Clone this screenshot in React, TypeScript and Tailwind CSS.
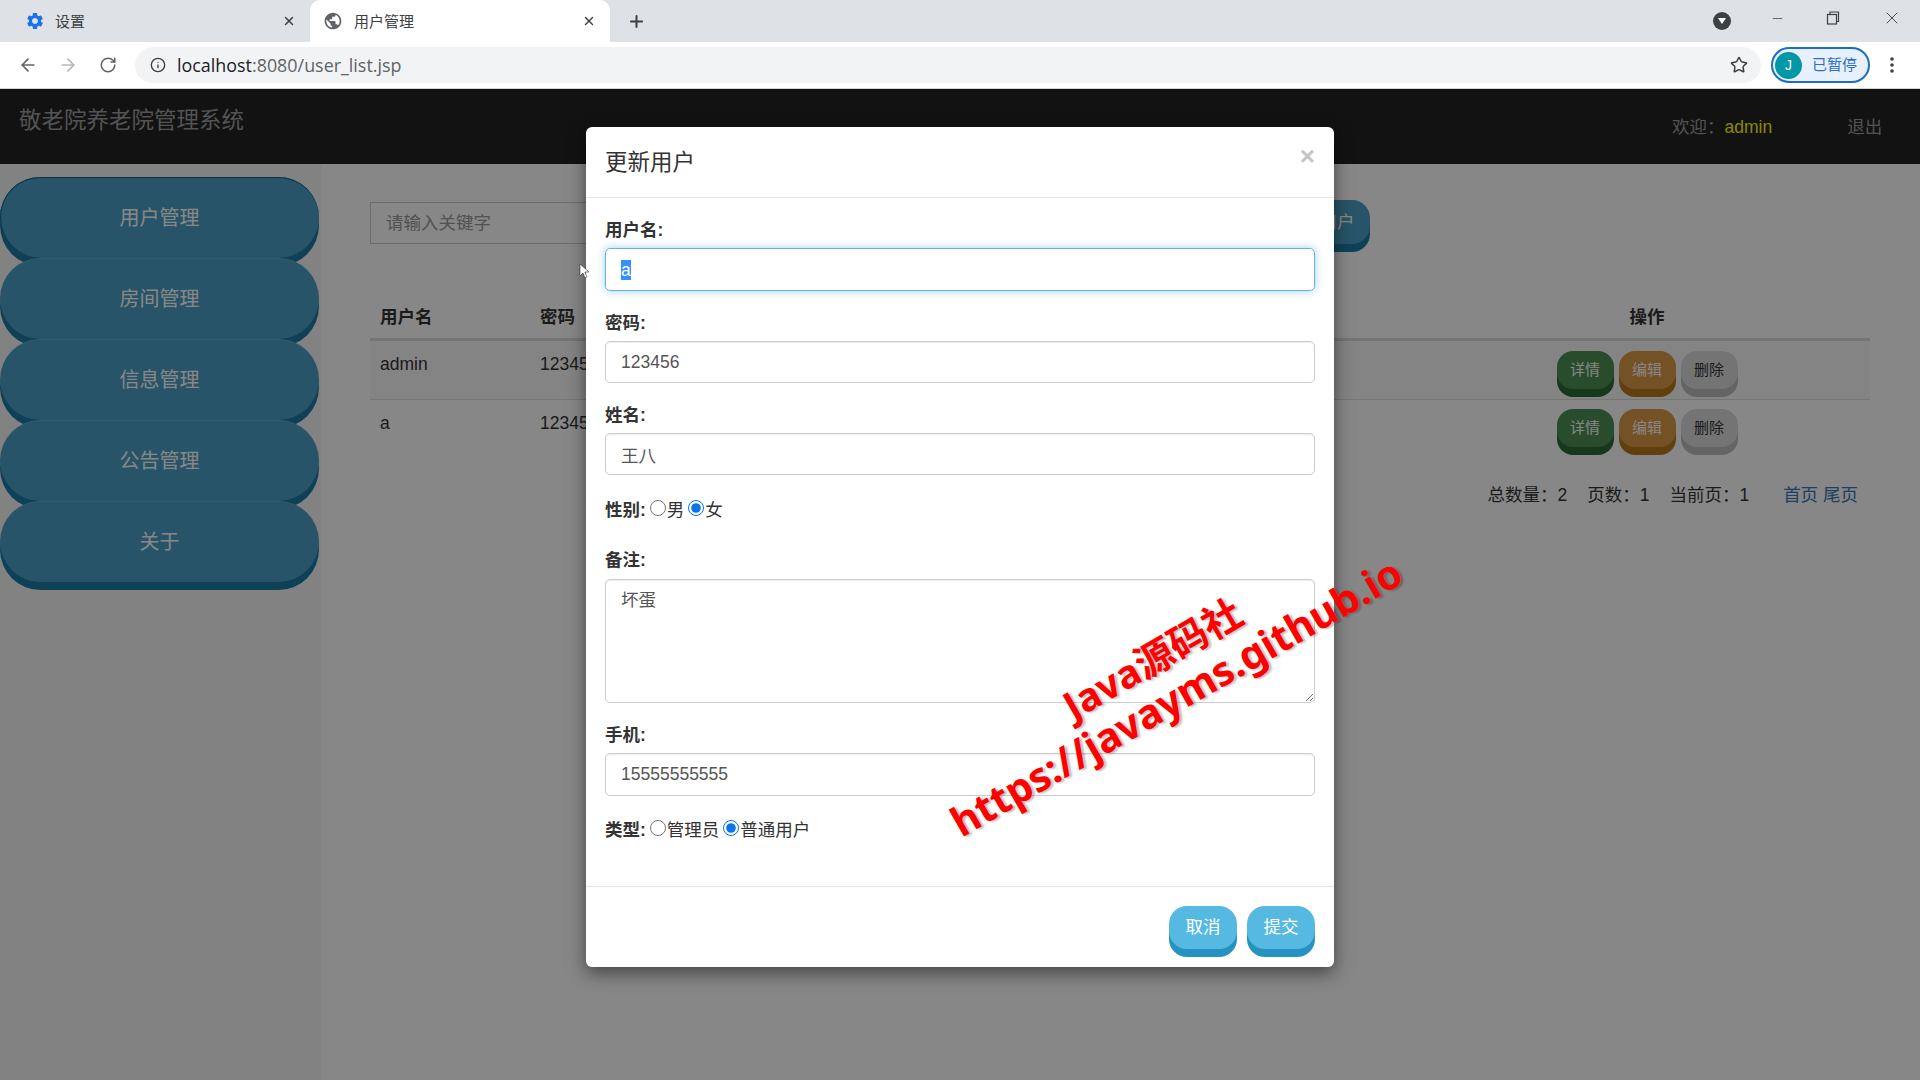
import React from "react";
import { ArrowLeft, ArrowRight, RotateCw, Info, Star, Plus, X, Minus } from "lucide-react";

const font = { fontFamily: '"Liberation Sans","Noto Sans CJK SC",sans-serif' };

function SideBtn({ label, active }: { label: string; active?: boolean }) {
  return (
    <div
      className={`h-[81px] w-[319px] rounded-[41px] bg-[#4a9fc4] flex items-center justify-center text-white text-[20px] relative ${
        active
          ? "shadow-[0_8px_0_#1b7ba6,inset_0_1px_0_#13658c,inset_1px_0_0_#13658c]"
          : "shadow-[0_8px_0_#1b7ba6,inset_0_1px_0_rgba(255,255,255,0.14)]"
      }`}
    >
      {label}
    </div>
  );
}

function RowBtn({ label, tone }: { label: string; tone: "g" | "o" | "w" }) {
  const cls =
    tone === "g"
      ? "bg-[#4e9053] shadow-[0_8px_0_#2f6b34] text-white"
      : tone === "o"
      ? "bg-[#dd9a48] shadow-[0_8px_0_#b87a1c] text-white"
      : "bg-[#dcdcdc] shadow-[0_8px_0_#bdbdbd] text-[#333]";
  return (
    <div className={`w-[57px] h-[38px] rounded-[16px] flex items-center justify-center text-[15px] ${cls}`}>{label}</div>
  );
}

function Row({ name, striped }: { name: string; striped?: boolean }) {
  return (
    <div className={`h-[59px] flex border-b ${striped ? "bg-[#f9f9f9] border-[#ddd]" : "border-transparent"}`}>
      <div className="w-[160px] pl-[10px] pt-[10px]">{name}</div>
      <div className="flex-1 pl-[10px] pt-[10px]">123456</div>
      <div className={`w-[446px] flex justify-center gap-[5px] ${striped ? "pt-[10px]" : "pt-[9px]"}`}>
        <RowBtn label="详情" tone="g" />
        <RowBtn label="编辑" tone="o" />
        <RowBtn label="删除" tone="w" />
      </div>
    </div>
  );
}

function Label({ children, className = "" }: { children: React.ReactNode; className?: string }) {
  return <div className={`font-bold text-[#333] text-[17.5px] leading-[25px] ${className}`}>{children}</div>;
}

function Field({ value, tall }: { value: string; tall?: boolean }) {
  return (
    <input
      readOnly
      value={value}
      className={`w-[710px] ${tall ? "h-[43px]" : "h-[42px]"} block rounded-[5px] border border-[#ccc] px-[15px] text-[17.5px] text-[#555] shadow-[inset_0_1px_1px_rgba(0,0,0,0.075)] outline-none`}
      style={font}
    />
  );
}

function Radio({ checked }: { checked?: boolean }) {
  return <input type="radio" readOnly checked={!!checked} className="w-[16px] h-[16px] m-0 accent-[#0a75ea] relative top-[-3px]" />;
}

function ModalBtn({ label }: { label: string }) {
  return (
    <div className="w-[68px] h-[43px] rounded-[18px] bg-[#56b9e2] shadow-[0_8px_0_#2592c2] text-white text-[17.5px] flex items-center justify-center">
      {label}
    </div>
  );
}

export default function App() {
  return (
    <div className="w-[1920px] h-[1080px] overflow-hidden flex flex-col relative bg-white text-[#333] text-[17.5px]" style={font}>
      {/* tab strip */}
      <div className="h-[42px] bg-[#dee1e6] flex items-end shrink-0">
        <div className="w-[310px] h-[42px] flex items-center pl-[25px] pr-[14px]">
          <svg width="20" height="20" viewBox="0 0 24 24" fill="#1a73e8">
            <path d="M19.14 12.94c.04-.3.06-.61.06-.94 0-.32-.02-.64-.07-.94l2.03-1.58c.18-.14.23-.41.12-.61l-1.92-3.32c-.12-.22-.37-.29-.59-.22l-2.39.96c-.5-.38-1.03-.7-1.62-.94l-.36-2.54c-.04-.24-.24-.41-.48-.41h-3.84c-.24 0-.43.17-.47.41l-.36 2.54c-.59.24-1.13.57-1.62.94l-2.39-.96c-.22-.08-.47 0-.59.22L2.74 8.87c-.12.21-.08.47.12.61l2.03 1.58c-.05.3-.09.63-.09.94s.02.64.07.94l-2.03 1.58c-.18.14-.23.41-.12.61l1.92 3.32c.12.22.37.29.59.22l2.39-.96c.5.38 1.03.7 1.62.94l.36 2.54c.05.24.24.41.48.41h3.84c.24 0 .44-.17.47-.41l.36-2.54c.59-.24 1.13-.56 1.62-.94l2.39.96c.22.08.47 0 .59-.22l1.92-3.32c.12-.22.07-.47-.12-.61l-2.01-1.58zM12 15.6c-1.98 0-3.6-1.62-3.6-3.6s1.62-3.6 3.6-3.6 3.6 1.62 3.6 3.6-1.62 3.6-3.6 3.6z" />
          </svg>
          <span className="ml-[10px] text-[15px] text-[#3c4043] flex-1 pt-[2px]">设置</span>
          <X size={14} strokeWidth={2.5} className="text-[#3c4043]" />
        </div>
        <div className="w-[300px] h-[42px] bg-white rounded-t-[10px] flex items-center pl-[13px] pr-[14px]">
          <svg width="20" height="20" viewBox="0 0 24 24" fill="#5f6368">
            <path d="M12 2C6.48 2 2 6.48 2 12s4.48 10 10 10 10-4.48 10-10S17.52 2 12 2zm-1 17.93c-3.95-.49-7-3.85-7-7.93 0-.62.08-1.21.21-1.79L9 15v1c0 1.1.9 2 2 2v1.93zm6.9-2.54c-.26-.81-1-1.39-1.9-1.39h-1v-3c0-.55-.45-1-1-1H8v-2h2c.55 0 1-.45 1-1V7h2c1.1 0 2-.9 2-2v-.41c2.93 1.19 5 4.06 5 7.41 0 2.08-.8 3.97-2.1 5.39z" />
          </svg>
          <span className="ml-[11px] text-[15px] text-[#3c4043] flex-1 pt-[2px]">用户管理</span>
          <X size={14} strokeWidth={2.5} className="text-[#3c4043]" />
        </div>
        <div className="w-[52px] h-[42px] flex items-center justify-center">
          <Plus size={19} strokeWidth={2.5} className="text-[#3c4043]" />
        </div>
        <div className="flex-1" />
        <div className="w-[18px] h-[18px] rounded-full bg-[#3c4043] flex items-center justify-center mb-[12px] mr-[39px]">
          <svg width="10" height="8" viewBox="0 0 10 8"><path d="M1 1h8L5 7z" fill="#fff" /></svg>
        </div>
        <div className="flex items-center h-[36px] self-start pr-[18px] text-[#3c4043]">
          <Minus size={15} strokeWidth={1.2} className="mr-[41px]" />
          <svg width="14" height="14" viewBox="0 0 14 14" fill="none" stroke="currentColor" strokeWidth="1.2" className="mr-[42px]">
            <rect x="1.5" y="3.5" width="9" height="9.5" /><path d="M4 3.5V1h8.5v9.5H10.5" />
          </svg>
          <X size={20} strokeWidth={1.1} />
        </div>
      </div>
      {/* toolbar */}
      <div className="h-[47px] bg-white border-b border-[#d0d2d5] flex items-center shrink-0 relative">
        <ArrowLeft size={20} className="ml-[18px] text-[#5f6368]" />
        <ArrowRight size={20} className="ml-[20px] text-[#b4b6b9]" />
        <RotateCw size={18} className="ml-[21px] text-[#5f6368]" />
        <div className="ml-[18px] w-[1626px] h-[36px] rounded-[18px] bg-[#f1f3f4] flex items-center pl-[15px] pr-[13px]">
          <Info size={16} className="text-[#3c4043]" />
          <span className="ml-[11px] text-[17.9px] text-[#5f6368] flex-1" style={{ fontFamily: '"Open Sans",sans-serif' }}>
            <span className="text-[#202124]">localhost</span>:8080/user_list.jsp
          </span>
          <Star size={18} className="text-[#3c4043]" />
        </div>
        <div className="ml-[10px] w-[99px] h-[36px] rounded-[18px] border-2 border-[#1a6fc4] bg-[#e8f0fe] flex items-center pl-[2px]">
          <div className="w-[27px] h-[27px] rounded-full bg-[#0097a7] text-white text-[14px] flex items-center justify-center">J</div>
          <span className="ml-[10px] text-[15px] text-[#2a6fc9]">已暂停</span>
        </div>
        <svg width="4" height="18" viewBox="0 0 4 18" className="ml-[20px]" fill="#3c4043">
          <circle cx="2" cy="3" r="1.8" /><circle cx="2" cy="9" r="1.8" /><circle cx="2" cy="15" r="1.8" />
        </svg>
      </div>
      {/* page */}
      <div className="flex-1 relative flex flex-col bg-white">
        <div className="h-[75px] bg-[#222] flex shrink-0 text-[#9d9d9d]">
          <div className="pl-[19px] pt-[16px] text-[22.5px] leading-[32px] flex-1">敬老院养老院管理系统</div>
          <div className="pt-[26px] leading-[25px] w-[248px]">
            <div className="flex">
              <span>欢迎：</span>
              <span className="text-[#ffff00]">admin</span>
              <span className="ml-[75px]">退出</span>
            </div>
          </div>
        </div>
        <div className="flex-1 flex">
          <div className="w-[321px] bg-[#f5f5f5] pt-[13px]">
            <SideBtn label="用户管理" active />
            <SideBtn label="房间管理" />
            <SideBtn label="信息管理" />
            <SideBtn label="公告管理" />
            <SideBtn label="关于" />
          </div>
          <div className="flex-1 pl-[49px] pt-[38px]">
            <div className="flex">
              <div className="w-[320px] h-[42px] border border-[#ccc] bg-white text-[#999] pl-[15px] flex items-center">请输入关键字</div>
              <div className="ml-[579px] w-[101px] h-[44px] rounded-[18px] bg-[#4a9fc4] shadow-[0_8px_0_#1b7ba6] text-white flex items-center justify-center mt-[-2px]">
                添加用户
              </div>
            </div>
            <div className="w-[1500px] mt-[54px]">
              <div className="h-[43px] flex border-b-[3px] border-[#ddd] font-bold">
                <div className="w-[160px] pl-[10px] pt-[6px]">用户名</div>
                <div className="flex-1 pl-[10px] pt-[6px]">密码</div>
                <div className="w-[446px] text-center pt-[6px]">操作</div>
              </div>
              <Row name="admin" striped />
              <Row name="a" />
              <div className="flex justify-end pr-[12px] pt-[24px] leading-[25px]">
                <span>总数量：2</span>
                <span className="ml-[20px]">页数：1</span>
                <span className="ml-[20px]">当前页：1</span>
                <span className="ml-[34px] text-[#337ab7]">首页 尾页</span>
              </div>
            </div>
          </div>
        </div>
        {/* backdrop + modal */}
        <div className="absolute inset-0 bg-black/[0.47] flex justify-center items-start">
          <div className="w-[748px] h-[840px] mt-[38px] bg-white rounded-[6px] shadow-[0_6px_18px_rgba(0,0,0,0.5)] flex flex-col">
            <div className="h-[71px] border-b border-[#e5e5e5] flex items-start justify-between px-[19px] shrink-0">
              <div className="text-[22.5px] leading-[32px] pt-[20px] text-[#333]">更新用户</div>
              <div className="text-[#c4c4c4] pt-[16px] font-bold text-[26px] leading-[26px]">×</div>
            </div>
            <div className="px-[19px] pt-[20px] flex-1">
              <Label className="mb-[5px]">用户名:</Label>
              <div className="w-[710px] h-[43px] rounded-[5px] border border-[#66afe9] shadow-[0_0_8px_rgba(102,175,233,0.6)] px-[15px] flex items-center text-[17.5px] text-[#555]">
                <span className="bg-[#3390ff] text-white leading-[20px]">a</span>
              </div>
              <Label className="mt-[20px] mb-[5px]">密码:</Label>
              <Field value="123456" />
              <Label className="mt-[20px] mb-[5px]">姓名:</Label>
              <Field value="王八" />
              <div className="mt-[23px] flex items-center h-[25px]">
                <Label>性别:</Label>
                <span className="ml-[4px] flex items-center"><Radio /></span>
                <span className="ml-[1px]">男</span>
                <span className="ml-[4px] flex items-center"><Radio checked /></span>
                <span className="ml-[1px]">女</span>
              </div>
              <Label className="mt-[25px] mb-[6px]">备注:</Label>
              <textarea
                readOnly
                value="坏蛋"
                className="block w-[710px] h-[124px] rounded-[5px] border border-[#ccc] px-[15px] py-[8px] text-[17.5px] text-[#555] leading-[25px] outline-none shadow-[inset_0_1px_1px_rgba(0,0,0,0.075)]"
                style={font}
              />
              <Label className="mt-[20px] mb-[5px]">手机:</Label>
              <Field value="15555555555" tall />
              <div className="mt-[22px] flex items-center h-[25px]">
                <Label>类型:</Label>
                <span className="ml-[4px] flex items-center"><Radio /></span>
                <span className="ml-[1px]">管理员</span>
                <span className="ml-[4px] flex items-center"><Radio checked /></span>
                <span className="ml-[1px]">普通用户</span>
              </div>
            </div>
            <div className="h-[81px] border-t border-[#e5e5e5] flex justify-end gap-[10px] pt-[19px] pr-[19px] shrink-0">
              <ModalBtn label="取消" />
              <ModalBtn label="提交" />
            </div>
          </div>
        </div>
      </div>
      {/* mouse cursor */}
      <svg width="10" height="16" viewBox="0 0 10 16" className="absolute left-[579px] top-[263px]">
        <path d="M1 1v12l3-3 2 5 2-1-2-5h4z" fill="#fff" stroke="#333" strokeWidth="0.6" />
      </svg>
      {/* watermark */}
      <div
        className="absolute left-[1066px] top-[686px] text-[#ff0000] font-bold text-[39px] leading-[44px] whitespace-nowrap origin-left rotate-[-30deg] [text-shadow:2px_2px_2px_rgba(0,0,0,0.25)]"
        style={{ fontFamily: '"Noto Sans","Noto Sans CJK SC",sans-serif' }}
      >
        Java源码社
      </div>
      <div
        className="absolute left-[954px] top-[803px] text-[#ff0000] font-bold text-[40.5px] leading-[44px] whitespace-nowrap origin-left rotate-[-30deg] [text-shadow:2px_2px_2px_rgba(0,0,0,0.25)]"
        style={{ fontFamily: '"Noto Sans","Noto Sans CJK SC",sans-serif' }}
      >
        https://javayms.github.io
      </div>
    </div>
  );
}
